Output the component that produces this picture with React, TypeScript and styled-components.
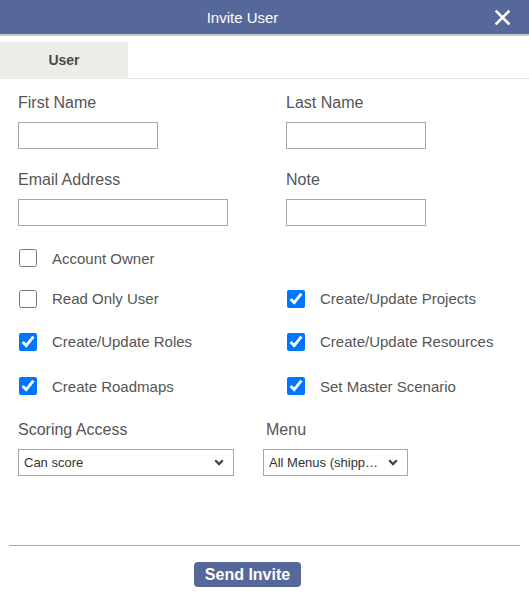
import React from 'react';
import styled, { createGlobalStyle } from 'styled-components';

const GlobalStyle = createGlobalStyle`
  html, body {
    margin: 0;
    padding: 0;
    background: #ffffff;
    font-family: "Liberation Sans", Arial, sans-serif;
  }
`;

const Dialog = styled.div`
  width: 529px;
  height: 596px;
  background: #ffffff;
  display: flex;
  flex-direction: column;
`;

const Header = styled.div`
  height: 34px;
  background: #566799;
  border-bottom: 2px solid #c9c9c9;
  display: flex;
  align-items: center;
  color: #ffffff;
`;

const Title = styled.div`
  flex: 1;
  text-align: center;
  font-size: 15px;
`;

const CloseButton = styled.button`
  width: 44px;
  height: 34px;
  border: none;
  background: transparent;
  display: flex;
  align-items: center;
  justify-content: center;
  padding: 0 10px 0 0;
  cursor: pointer;
`;

const TabBar = styled.div`
  margin-top: 6px;
  display: flex;
  border-bottom: 1px solid #e8e8e8;
`;

const Tab = styled.div`
  width: 128px;
  height: 36px;
  background: #ebede7;
  color: #4a4a4a;
  font-weight: bold;
  font-size: 14px;
  display: flex;
  align-items: center;
  justify-content: center;
`;

const Form = styled.div`
  padding: 15px 0 0 18px;
  display: flex;
  flex-direction: column;
`;

const FieldRow = styled.div`
  display: grid;
  grid-template-columns: 268px 1fr;
  margin-bottom: 22px;
`;

const Field = styled.div`
  display: flex;
  flex-direction: column;
`;

const Label = styled.label<{ $gap?: number; $indent?: number }>`
  font-size: 16px;
  line-height: 18px;
  color: #555555;
  margin-bottom: ${(p) => p.$gap ?? 10}px;
  padding-left: ${(p) => p.$indent ?? 0}px;
`;

const TextInput = styled.input<{ $w: number }>`
  box-sizing: border-box;
  width: ${(p) => p.$w}px;
  height: 27px;
  border: 1px solid #a6a6a6;
  border-radius: 0;
  padding: 0 4px;
  font-family: inherit;
  font-size: 13px;
  outline: none;
`;

const CheckGrid = styled.div`
  display: grid;
  grid-template-columns: 268px 1fr;
  grid-template-rows: 40px 41px 45px 44px;
  margin-top: -10px;
`;

const CheckRow = styled.label`
  display: flex;
  align-items: center;
  gap: 15px;
  font-size: 15px;
  color: #555555;
  cursor: pointer;
`;

const Check = styled.input`
  width: 18px;
  height: 18px;
  margin: 0 0 0 1px;
  accent-color: #0075ff;
`;

const SelectRow = styled.div`
  display: flex;
  gap: 29px;
  margin-top: 13px;
`;

const SelectBox = styled.div<{ $w: number }>`
  position: relative;
  width: ${(p) => p.$w}px;
  height: 27px;

  svg {
    position: absolute;
    right: 10px;
    top: 10px;
    pointer-events: none;
  }
`;

const Select = styled.select`
  box-sizing: border-box;
  appearance: none;
  width: 100%;
  height: 27px;
  border: 1px solid #a6a6a6;
  border-radius: 0;
  background: #ffffff;
  color: #333333;
  font-family: inherit;
  font-size: 13px;
  padding: 0 26px 0 5px;
  white-space: nowrap;
  overflow: hidden;
  text-overflow: ellipsis;
  outline: none;
`;

const Footer = styled.div`
  margin: auto 9px 0;
  padding: 16px 34px 9px 0;
  border-top: 1px solid #a9a9a9;
  display: flex;
  justify-content: center;
`;

const SendButton = styled.button`
  background: #566799;
  color: #ffffff;
  border: none;
  border-radius: 4px;
  height: 25px;
  padding: 0 11px;
  font-family: inherit;
  font-weight: bold;
  font-size: 16px;
  cursor: pointer;
`;

const Chevron = () => (
  <svg width="10" height="7" viewBox="0 0 10 7">
    <path d="M1.2 1.3L5 5.1L8.8 1.3" fill="none" stroke="#444444" strokeWidth="2.2" />
  </svg>
);

const checks: { label: string; checked: boolean }[] = [
  { label: 'Account Owner', checked: false },
  { label: '', checked: false },
  { label: 'Read Only User', checked: false },
  { label: 'Create/Update Projects', checked: true },
  { label: 'Create/Update Roles', checked: true },
  { label: 'Create/Update Resources', checked: true },
  { label: 'Create Roadmaps', checked: true },
  { label: 'Set Master Scenario', checked: true },
];

const App = () => {
  return (
    <>
      <GlobalStyle />
      <Dialog>
        <Header>
          <Title>Invite User</Title>
          <CloseButton aria-label="Close">
            <svg width="15" height="15" viewBox="0 0 15 15">
              <path d="M1.5 1.5L13.5 13.5M13.5 1.5L1.5 13.5" stroke="#ffffff" strokeWidth="2.6" strokeLinecap="square" />
            </svg>
          </CloseButton>
        </Header>
        <TabBar>
          <Tab>User</Tab>
        </TabBar>
        <Form>
          <FieldRow>
            <Field>
              <Label>First Name</Label>
              <TextInput $w={140} />
            </Field>
            <Field>
              <Label>Last Name</Label>
              <TextInput $w={140} />
            </Field>
          </FieldRow>
          <FieldRow>
            <Field>
              <Label>Email Address</Label>
              <TextInput $w={210} />
            </Field>
            <Field>
              <Label>Note</Label>
              <TextInput $w={140} />
            </Field>
          </FieldRow>
          <CheckGrid>
            {checks.map((c, i) =>
              c.label ? (
                <CheckRow key={i}>
                  <Check type="checkbox" defaultChecked={c.checked} />
                  {c.label}
                </CheckRow>
              ) : (
                <div key={i} />
              )
            )}
          </CheckGrid>
          <SelectRow>
            <Field>
              <Label $gap={10}>Scoring Access</Label>
              <SelectBox $w={216}>
                <Select defaultValue="score">
                  <option value="score">Can score</option>
                  <option value="view">View only</option>
                </Select>
                <Chevron />
              </SelectBox>
            </Field>
            <Field>
              <Label $gap={10} $indent={3}>Menu</Label>
              <SelectBox $w={145}>
                <Select defaultValue="all">
                  <option value="all">All Menus (shipped default)</option>
                </Select>
                <Chevron />
              </SelectBox>
            </Field>
          </SelectRow>
        </Form>
        <Footer>
          <SendButton>Send Invite</SendButton>
        </Footer>
      </Dialog>
    </>
  );
};

export default App;
